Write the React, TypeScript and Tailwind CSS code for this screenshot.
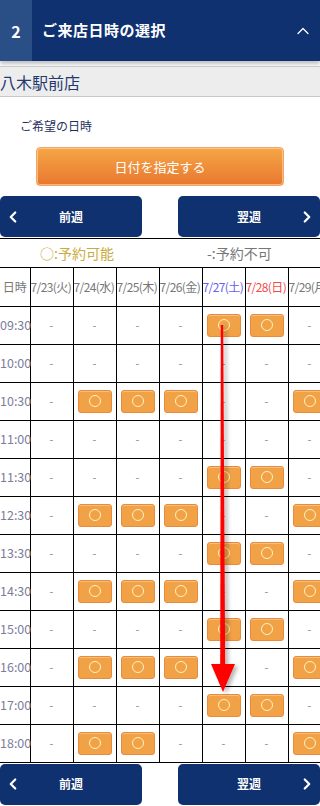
import { ChevronLeft, ChevronRight, ChevronUp } from 'lucide-react'

const DATES = [
  { label: '7/23(火)', color: 'text-[#777]' },
  { label: '7/24(水)', color: 'text-[#777]' },
  { label: '7/25(木)', color: 'text-[#777]' },
  { label: '7/26(金)', color: 'text-[#777]' },
  { label: '7/27(土)', color: 'text-[#6b5cf0]' },
  { label: '7/28(日)', color: 'text-[#f24a4a]' },
  { label: '7/29(月)', color: 'text-[#777]' },
]

// 1 = 予約可能, 0 = 予約不可
const SLOTS: { time: string; open: number[] }[] = [
  { time: '09:30', open: [0, 0, 0, 0, 1, 1, 0] },
  { time: '10:00', open: [0, 0, 0, 0, 0, 0, 0] },
  { time: '10:30', open: [0, 1, 1, 1, 0, 0, 1] },
  { time: '11:00', open: [0, 0, 0, 0, 0, 0, 0] },
  { time: '11:30', open: [0, 0, 0, 0, 1, 1, 0] },
  { time: '12:30', open: [0, 1, 1, 1, 0, 0, 1] },
  { time: '13:30', open: [0, 0, 0, 0, 1, 1, 0] },
  { time: '14:30', open: [0, 1, 1, 1, 0, 0, 1] },
  { time: '15:00', open: [0, 0, 0, 0, 1, 1, 0] },
  { time: '16:00', open: [0, 1, 1, 1, 0, 0, 1] },
  { time: '17:00', open: [0, 0, 0, 0, 1, 1, 0] },
  { time: '18:00', open: [0, 1, 1, 0, 0, 0, 1] },
]

const FONT = { fontFamily: '"Noto Sans CJK JP", "Noto Sans", sans-serif' }

function WeekNav() {
  return (
    <div className="flex justify-between">
      <button
        type="button"
        className="relative flex h-[41px] w-[142px] items-center justify-center rounded-[5px] bg-[#0f3170] text-[12px] font-bold text-white"
      >
        <ChevronLeft className="absolute left-[4px] h-[18px] w-[18px]" strokeWidth={3} />
        前週
      </button>
      <button
        type="button"
        className="relative flex h-[41px] w-[142px] items-center justify-center rounded-[5px] bg-[#0f3170] text-[12px] font-bold text-white"
      >
        翌週
        <ChevronRight className="absolute right-[4px] h-[18px] w-[18px]" strokeWidth={3} />
      </button>
    </div>
  )
}

function SlotButton() {
  return (
    <button
      type="button"
      className="mx-auto flex h-[23px] w-[34px] items-center justify-center rounded-[3px] border border-[#ea8a3c] bg-[#f2a246] shadow-[inset_0_1px_0_#f8c07c]"
    >
      <span className="block h-[12px] w-[12px] rounded-full border border-[#fff3c2]" />
    </button>
  )
}

export default function App() {
  return (
    <div className="relative w-[320px] overflow-hidden bg-white" style={FONT}>
      {/* Header */}
      <div className="flex h-[61px] items-stretch bg-[#0f3170] text-white shadow-[0_3px_4px_rgba(0,0,0,0.25)]">
        <div className="flex w-[32px] items-center justify-center bg-[#2a4e86] text-[16px] font-bold">2</div>
        <div className="flex flex-1 items-center pl-[10px] text-[15px] font-bold tracking-[0.5px]">ご来店日時の選択</div>
        <div className="flex items-center pr-[7px]">
          <ChevronUp className="h-[20px] w-[20px]" strokeWidth={1.5} />
        </div>
      </div>

      {/* Shop name */}
      <div className="mt-[5px] flex h-[31px] items-center border-y border-[#c9c9c9] bg-[#ededed] text-[16px] text-[#1f3a6e]">
        八木駅前店
      </div>

      <div className="pl-[20px] pt-[20px] text-[12px] text-[#1f2f5e]">ご希望の日時</div>

      <div className="flex justify-center pt-[12px]">
        <button
          type="button"
          className="h-[39px] w-[248px] rounded-[4px] border border-[#f0a56a] bg-gradient-to-b from-[#f6a646] to-[#e8772f] text-[13px] text-white shadow-[inset_0_0_0_1px_rgba(255,220,180,0.6)]"
        >
          日付を指定する
        </button>
      </div>

      <div className="pt-[10px]">
        <WeekNav />
      </div>

      {/* Legend */}
      <div className="mt-[1px] flex h-[30px] items-center border-y border-black text-[14px]">
        <div className="w-1/2 pl-[40px] text-[#c9ab3e]">○:予約可能</div>
        <div className="w-1/2 pl-[47px] text-[#777]">-:予約不可</div>
      </div>

      {/* Schedule */}
      <div className="overflow-hidden">
        <table className="w-[331px] table-fixed border-collapse">
          <colgroup>
            <col className="w-[30px]" />
            {DATES.map((d) => (
              <col key={d.label} className="w-[43px]" />
            ))}
          </colgroup>
          <thead>
            <tr className="h-[38px]">
              <th className="border-b border-r border-black p-0 text-[12px] font-normal text-[#777]">日時</th>
              {DATES.map((d) => (
                <th
                  key={d.label}
                  className={`whitespace-nowrap border border-t-0 border-black p-0 text-left text-[12px] font-normal tracking-[-0.6px] ${d.color}`}
                >
                  {d.label}
                </th>
              ))}
            </tr>
          </thead>
          <tbody>
            {SLOTS.map((s) => (
              <tr key={s.time} className="h-[38px]">
                <td className="whitespace-nowrap border border-l-0 border-black p-0 text-left text-[12.5px] text-[#7b7d9c]">{s.time}</td>
                {s.open.map((o, i) => (
                  <td key={i} className="border border-black p-0 text-center text-[11px] text-[#888]">
                    {o ? <SlotButton /> : '-'}
                  </td>
                ))}
              </tr>
            ))}
          </tbody>
        </table>
      </div>

      <div className="pb-[3px] pt-[1px]">
        <WeekNav />
      </div>

      {/* Red arrow annotation */}
      <svg className="pointer-events-none absolute left-0 top-0" width="320" height="806" viewBox="0 0 320 806">
        <defs>
          <filter id="sh" x="-50%" y="-10%" width="200%" height="120%">
            <feDropShadow dx="3" dy="2" stdDeviation="2" floodColor="#000" floodOpacity="0.3" />
          </filter>
        </defs>
        <g filter="url(#sh)" fill="#ff0000">
          <polygon points="220.8,325 223.2,325 225.2,667 220.2,667" />
          <polygon points="211,664 235,664 223,692" />
        </g>
      </svg>
    </div>
  )
}
